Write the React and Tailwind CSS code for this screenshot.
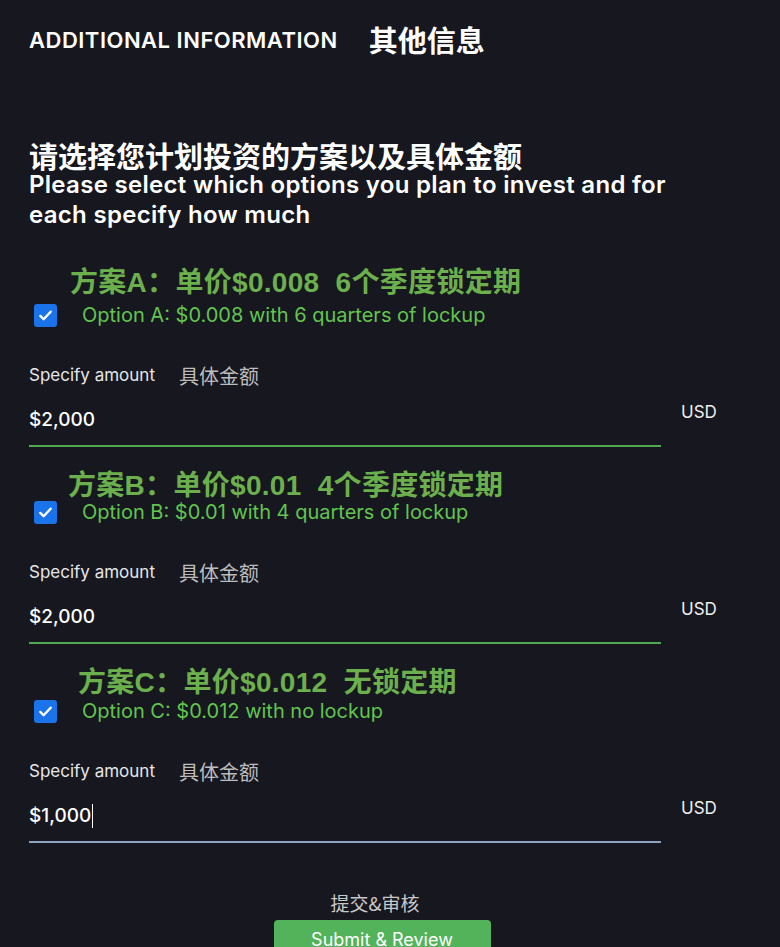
import React, { useState } from 'react'

const options = [
  { key: 'A', zh: '方案A：单价$0.008  6个季度锁定期', en: 'Option A: $0.008 with 6 quarters of lockup', amount: '$2,000', indent: 'ml-[41px]', top: '', checkGap: 'mt-[4px]', line: 'bg-[#4fa84f]' },
  { key: 'B', zh: '方案B：单价$0.01  4个季度锁定期', en: 'Option B: $0.01 with 4 quarters of lockup', amount: '$2,000', indent: 'ml-[39px]', top: 'mt-[2px]', checkGap: '-mt-[2px]', line: 'bg-[#4fa84f]' },
  { key: 'C', zh: '方案C：单价$0.012  无锁定期', en: 'Option C: $0.012 with no lockup', amount: '$1,000', indent: 'ml-[49px]', top: 'mt-[2px]', checkGap: 'mt-[0px]', line: 'bg-[#8ea3c4]', focused: true },
]

const Check = () => (
  <span className="w-[23px] h-[23px] rounded-[3px] bg-[#1a73e8] flex items-center justify-center shrink-0">
    <svg width="15" height="15" viewBox="0 0 16 16" fill="none">
      <path d="M2.5 8.5l3.5 3.5 7.5-8" stroke="white" strokeWidth="2.6" strokeLinecap="round" strokeLinejoin="round" />
    </svg>
  </span>
)

const OptionBlock = ({ opt }) => (
  <div className={`flex flex-col ${opt.top}`}>
    <div className={`${opt.indent} text-[28px] leading-[32px] font-bold tracking-[0.3px] text-[#6cb04e] whitespace-pre`} style={{ fontFamily: '"Liberation Sans", "Noto Sans CJK SC", sans-serif' }}>
      {opt.zh}
    </div>
    <div className={`flex items-center ${opt.checkGap} ml-[5px]`}>
      <Check />
      <span className="ml-[25px] text-[20px] leading-[24px] text-[#62c54e]">{opt.en}</span>
    </div>
    <div className="flex items-center mt-[37px] h-[24px]">
      <span className="text-[17px] text-[#e6e6e6]">Specify amount</span>
      <span className="ml-[24px] text-[20px] text-[#bdbdbd]" style={{ fontFamily: '"Noto Sans CJK SC", sans-serif' }}>具体金额</span>
    </div>
    <div className="flex items-start mt-[12px]">
      <div className="w-[632px] shrink-0">
        <div className="h-[45px] pt-[8px] flex items-start text-[19px] leading-[24px] font-medium text-white">
          {opt.amount}
          {opt.focused && <span className="w-[1px] h-[24px] bg-white ml-[1px]" />}
        </div>
        <div className={`h-[2px] ${opt.line}`} />
      </div>
      <span className="ml-[20px] text-[17px] text-[#eeeeee]">USD</span>
    </div>
  </div>
)

export default function App() {
  const [selected] = useState(['A', 'B', 'C'])
  return (
    <div className="h-[947px] overflow-hidden bg-[#16171f] text-white px-[29px]" style={{ fontFamily: 'Inter, "Noto Sans CJK SC", sans-serif' }}>
      <div className="flex items-center pt-[22px] h-[58px]">
        <span className="text-[22px] font-semibold tracking-[0.5px]">ADDITIONAL INFORMATION</span>
        <span className="ml-[31px] text-[29px] font-bold" style={{ fontFamily: '"Noto Sans CJK SC", sans-serif' }}>其他信息</span>
      </div>

      <div className="mt-[83px] text-[29px] leading-[29px] font-bold" style={{ fontFamily: '"Noto Sans CJK SC", sans-serif' }}>请选择您计划投资的方案以及具体金额</div>
      <div className="text-[24px] leading-[30px] font-semibold tracking-[0.3px] w-[690px]">
        Please select which options you plan to invest and for each specify how much
      </div>

      <div className="mt-[37px] flex flex-col gap-[21px]">
        {options.filter(o => selected.includes(o.key)).map(o => <OptionBlock key={o.key} opt={o} />)}
      </div>

      <div className="flex flex-col items-center mt-[48px] ml-[-29px] w-[780px]">
        <span className="text-[19px] leading-[24px] text-[#c9c9c9] -ml-[30px]" style={{ fontFamily: '"Noto Sans CJK SC", sans-serif' }}>提交&审核</span>
        <button className="mt-[5px] -ml-[16px] w-[217px] h-[44px] rounded-[4px] bg-[#52b35a] text-white text-[18px] pt-[6px] flex justify-center items-start">
          Submit &amp; Review
        </button>
      </div>
    </div>
  )
}
